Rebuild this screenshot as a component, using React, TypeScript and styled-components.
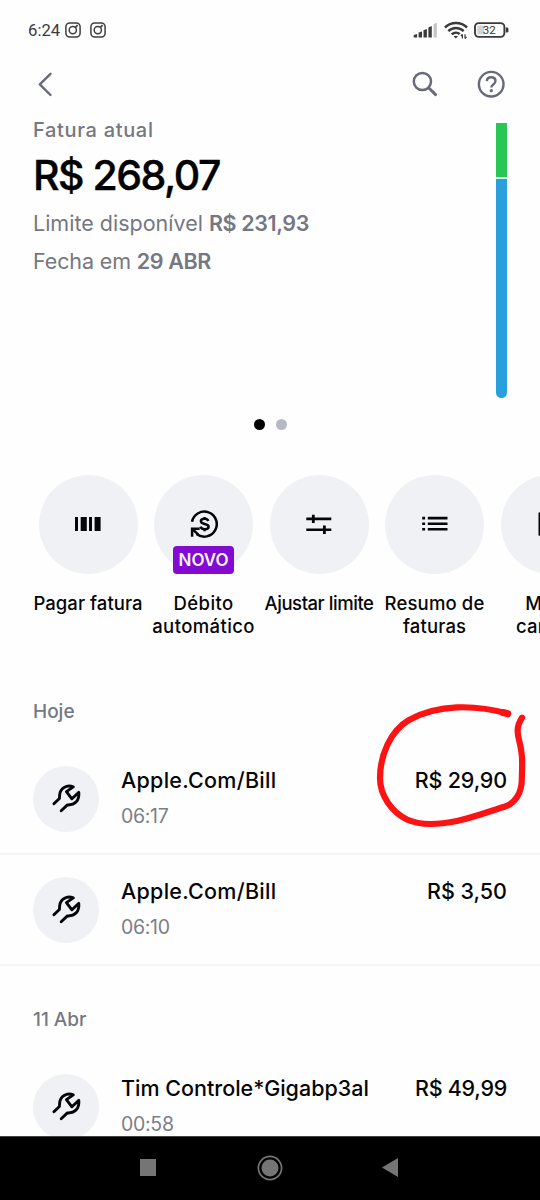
import React from "react";
import styled, { createGlobalStyle } from "styled-components";

const GlobalStyle = createGlobalStyle`
  * { box-sizing: border-box; }
  body { margin: 0; background: #fff; }
`;

const INK = "#050608";
const MUTED = "#757782";
const DISC = "#f0f1f5";

const Screen = styled.div`
  width: 540px;
  height: 1200px;
  display: flex;
  flex-direction: column;
  overflow: hidden;
  background: #fefefe;
  color: ${INK};
  font-family: Inter, "Liberation Sans", sans-serif;
`;

const StatusBar = styled.div`
  height: 60px;
  flex: none;
  display: flex;
  align-items: center;
  justify-content: space-between;
  padding: 0 31px 0 28px;
`;

const StatusGroup = styled.div<{ $gap: number }>`
  display: flex;
  align-items: center;
  gap: ${(p) => p.$gap}px;
`;

const Clock = styled.span`
  width: 37px;
  padding-top: 1px;
  font-family: Roboto, sans-serif;
  font-size: 16.7px;
  line-height: 20px;
  color: #3c3c3c;
  white-space: nowrap;
`;

const TopBar = styled.div`
  height: 48px;
  flex: none;
  display: flex;
  align-items: center;
  justify-content: space-between;
  padding: 0 35px 0 37px;
`;

const TopActions = styled.div`
  display: flex;
  gap: 39px;
`;

const Summary = styled.section`
  height: 290px;
  flex: none;
  display: flex;
  justify-content: space-between;
  padding: 15px 33px 0 33px;
`;

const SummaryText = styled.div`
  display: flex;
  flex-direction: column;
  white-space: nowrap;
`;

const Caption = styled.div`
  height: 16px;
  font-size: 20px;
  font-weight: 500;
  line-height: 15px;
  letter-spacing: 0.68px;
  color: ${MUTED};
`;

const Total = styled.div`
  margin-top: 11px;
  font-size: 41px;
  font-weight: 500;
  line-height: 51px;
  letter-spacing: -1.5px;
  color: #000;
  -webkit-text-stroke: 0.4px #000;
`;

const Detail = styled.div<{ $gap: number; $tracking: number }>`
  margin-top: ${(p) => p.$gap}px;
  font-size: 21.5px;
  font-weight: 400;
  line-height: 35px;
  letter-spacing: ${(p) => p.$tracking}px;
  color: ${MUTED};

  b {
    font-weight: 600;
    letter-spacing: -0.4px;
  }
`;

const LimitBar = styled.div`
  width: 11px;
  height: 275px;
  display: flex;
  flex-direction: column;
  gap: 2px;
  background: #d9f6ec;
  border-radius: 0 0 6px 6px;
`;

const Available = styled.div`
  height: 54px;
  background: #28c653;
`;

const Used = styled.div`
  flex: 1;
  background: #29a0dc;
  border-radius: 0 0 6px 6px;
`;

const Pager = styled.div`
  height: 53px;
  flex: none;
  display: flex;
  justify-content: center;
  align-items: center;
  gap: 11px;
`;

const Dot = styled.span<{ $active?: boolean }>`
  width: 11px;
  height: 11px;
  border-radius: 50%;
  background: ${(p) => (p.$active ? "#000" : "#b6b9c4")};
`;

const Shortcuts = styled.nav`
  height: 248px;
  flex: none;
  display: flex;
  padding: 24px 0 0 30.3px;
`;

const Shortcut = styled.div`
  width: 115.5px;
  flex: none;
  display: flex;
  flex-direction: column;
  align-items: center;
`;

const ShortcutDisc = styled.div`
  position: relative;
  width: 99px;
  height: 99px;
  border-radius: 50%;
  display: flex;
  align-items: center;
  justify-content: center;
  background: ${DISC};
  padding-bottom: 2px;
`;

const Badge = styled.span`
  position: absolute;
  left: 19px;
  bottom: 0;
  width: 61px;
  height: 28px;
  border-radius: 4px;
  background: #820ad1;
  color: #fbf2ff;
  font-size: 17px;
  font-weight: 600;
  line-height: 28px;
  text-align: center;
`;

const ShortcutLabel = styled.div<{ $tracking: number }>`
  margin-top: 18px;
  font-size: 18.5px;
  font-weight: 500;
  line-height: 23px;
  letter-spacing: ${(p) => p.$tracking}px;
  text-align: center;
  white-space: pre;
`;

const Feed = styled.main`
  flex: 1;
  min-height: 0;
  overflow: hidden;
`;

const DayHeading = styled.h2<{ $first?: boolean }>`
  margin: 0;
  height: ${(p) => (p.$first ? 45 : 86)}px;
  padding: ${(p) => (p.$first ? 0 : 41)}px 33px 0;
  font-size: 19px;
  font-weight: 500;
  line-height: 25px;
  color: ${MUTED};
`;

const Row = styled.div`
  height: 111px;
  display: flex;
  align-items: flex-start;
  padding: 22px 33px 0;
  border-bottom: 2px solid #f4f4f6;
`;

const RowDisc = styled.div`
  width: 66px;
  height: 66px;
  flex: none;
  border-radius: 50%;
  background: ${DISC};
`;

const RowText = styled.div`
  flex: 1;
  margin-left: 22px;
  white-space: nowrap;
`;

const Merchant = styled.div<{ $tracking: number }>`
  font-size: 21.5px;
  font-weight: 500;
  line-height: 29px;
  letter-spacing: ${(p) => p.$tracking}px;
`;

const Time = styled.div`
  margin-top: 7px;
  font-size: 19.5px;
  font-weight: 400;
  line-height: 28px;
  letter-spacing: -0.3px;
  color: #7c7e88;
`;

const Amount = styled.div<{ $tracking: number }>`
  position: relative;
  font-size: 21.5px;
  font-weight: 500;
  line-height: 29px;
  letter-spacing: ${(p) => p.$tracking}px;
  white-space: nowrap;
`;

const Scribble = styled.svg`
  position: absolute;
  right: -33px;
  top: -76px;
  pointer-events: none;
`;

const NavBar = styled.footer`
  height: 64px;
  flex: none;
  display: flex;
  align-items: center;
  justify-content: space-between;
  padding: 0 142px 2px 140px;
  background: #000;
  border-top: 1px solid #444;
`;

const InstagramIcon = () => (
  <svg width="16" height="16" viewBox="0 0 16 16" fill="none" stroke="#3f3f3f" strokeWidth="1.5">
    <rect x="0.9" y="0.9" width="14.2" height="14.2" rx="3.8" />
    <circle cx="7.8" cy="8.1" r="3.6" />
    <path d="M10.5 5.3 12.6 3.2" strokeWidth="1.7" />
  </svg>
);

const SignalIcon = () => (
  <svg width="24" height="16" viewBox="0 0 24 16" fill="#3a3a3a">
    <path d="M.7 15.500v-2.600l3.400-1v3.600zM5.600 15.500v-5l3.400-1.100v6.100zM10.500 15.500V8.200l3.400-1.200v8.500zM15.400 15.500V5.400l3.400-1.400v11.500z" />
    <path d="M20.600 15.500V2L23.800.7v14.800z" fill="#c4c4c4" />
  </svg>
);

const WifiIcon = () => (
  <svg width="24" height="18" viewBox="0 0 24 18" fill="none" stroke="#3a3a3a" strokeWidth="2.5">
    <path d="M1 6.500C7 .6 17 .6 23 6.500M4.300 10.100c4.400-4.300 11-4.300 15.400 0M7.700 13.400c2.500-2.200 6-2.200 8-.3" />
    <path d="m11.800 17.600-2.100-2.200c1.200-1 3-1 4.200 0z" fill="#3a3a3a" stroke="none" />
    <path d="M18.400 17.500v-4.200M16.900 15l1.500-1.700M21 13.300v4.200M22.500 15.800 21 17.500" strokeWidth="1.200" />
  </svg>
);

const BatteryIcon = () => (
  <svg width="35" height="16" viewBox="0 0 35 16">
    <rect x="1" y="1.1" width="29.400" height="13.800" rx="3.800" fill="none" stroke="#3a3a3a" strokeWidth="1.900" />
    <rect x="3.200" y="3.600" width="6.800" height="8.800" rx="1.500" fill="#d4d4d4" />
    <path d="M31.800 5.400h1.200q1.400 0 1.400 1.400v2.400q0 1.400-1.400 1.400h-1.200z" fill="#3a3a3a" />
    <text x="15.200" y="12.100" textAnchor="middle" fontFamily="Roboto, sans-serif" fontSize="11.500" fill="#333">
      32
    </text>
  </svg>
);

const BackIcon = () => (
  <svg width="16" height="26" viewBox="0 0 16 26" fill="none" stroke="#686b77" strokeWidth="2.400" strokeLinecap="round" strokeLinejoin="round">
    <path d="M13.500 2.800 2.800 13.400 13.500 24" />
  </svg>
);

const SearchIcon = () => (
  <svg width="27" height="28" viewBox="0 0 27 28" fill="none" stroke="#686b77" strokeWidth="2.500">
    <circle cx="11.400" cy="11.500" r="8.600" />
    <path d="m17.600 17.700 7 6.900" strokeWidth="2.900" strokeLinecap="round" />
  </svg>
);

const HelpIcon = () => (
  <svg width="28" height="28" viewBox="0 0 28 28" fill="none" stroke="#686b77" strokeWidth="2.400">
    <circle cx="14.200" cy="14.200" r="12.300" />
    <path d="M9.800 11.200c.2-2.500 2-3.900 4.300-3.900 2.600 0 4.400 1.500 4.400 3.700 0 3.500-4.200 3.300-4.200 6.500" />
    <circle cx="14.300" cy="20.700" r="1.600" fill="#686b77" stroke="none" />
  </svg>
);

const BarcodeIcon = () => (
  <svg width="26" height="14" viewBox="0 0 26 14" fill={INK}>
    <path d="M0 0h3v14H0zM5.700 0h6.100v14H5.700zM14 0h3v14h-3zM19.600 0h6v14h-6z" />
  </svg>
);

const AutoDebitIcon = () => (
  <svg width="28" height="28" viewBox="0 0 28 28" fill="none" stroke={INK} strokeWidth="2.500">
    <path d="M2 11.700A12.500 12.500 0 1 1 6.600 24" />
    <path d="M2.100 26.800v-8h7.600M2.600 19.200l5.600 5.500" />
    <path d="M18.300 11c-.5-1.500-1.900-2.200-3.700-2.200-2.200 0-3.700.9-3.700 2.500 0 3.700 7.700 1.700 7.700 5.400 0 1.700-1.600 2.500-3.900 2.500-2.100 0-3.700-.8-4.200-2.500M14.600 7v2M14.600 19v2.200" strokeWidth="2.500" />
  </svg>
);

const SlidersIcon = () => (
  <svg width="26" height="20" viewBox="0 0 26 20" fill="none" stroke={INK} strokeWidth="2.600">
    <path d="M.3 4.900h25M.3 15.800h25" />
    <path d="M7.300.8v8.300M18.400 11.600v8.300" strokeWidth="2.800" />
  </svg>
);

const ListIcon = () => (
  <svg width="26" height="16" viewBox="0 0 26 16" fill={INK}>
    <path d="M.2.8h2.900v2.600H.2zM.2 6.400h2.900V9H.2zM.2 12h2.900v2.600H.2zM5.800.8h19.700v2.600H5.800zM5.800 6.400h19.700V9H5.800zM5.800 12h19.700v2.600H5.800z" />
  </svg>
);

const CardIcon = () => (
  <svg width="24" height="24" viewBox="0 0 24 24" fill="none" stroke={INK} strokeWidth="2.600">
    <rect x="1.800" y="1.800" width="20.500" height="20.500" />
  </svg>
);

const WrenchIcon = () => (
  <svg width="66" height="66" viewBox="0 0 66 66" fill="none" stroke={INK} strokeWidth="2.900" strokeLinejoin="round" strokeLinecap="round">
    <path d="M20.900 37.800 26.400 32.500 26.700 28.500C27.300 22.300 33.500 18.300 40.300 20.900L33.400 25.600 38.900 32.800 45.800 26.400C46.600 34.500 42 39.300 34.400 38.900L28.200 44.700" />
  </svg>
);

const shortcuts = [
  { label: "Pagar fatura", icon: <BarcodeIcon />, tracking: 0.05 },
  { label: "Débito\nautomático", icon: <AutoDebitIcon />, tracking: 0.4, badge: "NOVO" },
  { label: "Ajustar limite", icon: <SlidersIcon />, tracking: -0.45 },
  { label: "Resumo de\nfaturas", icon: <ListIcon />, tracking: 0.15 },
  { label: "Meus\ncartões", icon: <CardIcon />, tracking: 0.15 },
];

type Purchase = {
  merchant: string;
  time: string;
  amount: string;
  merchantTracking?: number;
  amountTracking?: number;
  circled?: boolean;
};

const PurchaseRow = ({ merchant, time, amount, merchantTracking = 0, amountTracking = 0, circled }: Purchase) => (
  <Row>
    <RowDisc>
      <WrenchIcon />
    </RowDisc>
    <RowText>
      <Merchant $tracking={merchantTracking}>{merchant}</Merchant>
      <Time>{time}</Time>
    </RowText>
    <Amount $tracking={amountTracking}>
      {amount}
      {circled && (
        <Scribble width="180" height="150" viewBox="0 0 180 150" fill="none" stroke="#fc1414" strokeWidth="6.200" strokeLinecap="round" strokeLinejoin="round">
          <path d="M147.800 23.700C115 14.500 78 14 49 30C30 41 20 66 20 88C20 106 32 122 47 129.500C62 136.500 80 134.500 97 131C115 127 132 120.500 145 116.500C156 113 161.500 102 161.800 90C162.200 72 163 66 159.500 52C156.500 41 157 36 162 27.700" />
          <path d="m143 22.500 4.800 1.200" strokeWidth="7" />
        </Scribble>
      )}
    </Amount>
  </Row>
);

export default function App() {
  return (
    <Screen>
      <GlobalStyle />
      <StatusBar>
        <StatusGroup $gap={0}>
          <Clock>6:24</Clock>
          <StatusGroup $gap={9}>
            <InstagramIcon />
            <InstagramIcon />
          </StatusGroup>
        </StatusGroup>
        <StatusGroup $gap={6.5}>
          <SignalIcon />
          <WifiIcon />
          <BatteryIcon />
        </StatusGroup>
      </StatusBar>
      <TopBar>
        <BackIcon />
        <TopActions>
          <SearchIcon />
          <HelpIcon />
        </TopActions>
      </TopBar>
      <Summary>
        <SummaryText>
          <Caption>Fatura atual</Caption>
          <Total>R$ 268,07</Total>
          <Detail $gap={5} $tracking={0}>
            Limite disponível <b>R$ 231,93</b>
          </Detail>
          <Detail $gap={3} $tracking={-0.12}>
            Fecha em <b>29 ABR</b>
          </Detail>
        </SummaryText>
        <LimitBar>
          <Available />
          <Used />
        </LimitBar>
      </Summary>
      <Pager>
        <Dot $active />
        <Dot />
      </Pager>
      <Shortcuts>
        {shortcuts.map((s) => (
          <Shortcut key={s.label}>
            <ShortcutDisc>
              {s.icon}
              {s.badge && <Badge>{s.badge}</Badge>}
            </ShortcutDisc>
            <ShortcutLabel $tracking={s.tracking}>{s.label}</ShortcutLabel>
          </Shortcut>
        ))}
      </Shortcuts>
      <Feed>
        <DayHeading $first>Hoje</DayHeading>
        <PurchaseRow merchant="Apple.Com/Bill" time="06:17" amount="R$ 29,90" merchantTracking={0.27} amountTracking={-0.15} circled />
        <PurchaseRow merchant="Apple.Com/Bill" time="06:10" amount="R$ 3,50" merchantTracking={0.27} />
        <DayHeading>11 Abr</DayHeading>
        <PurchaseRow merchant="Tim Controle*Gigabp3al" time="00:58" amount="R$ 49,99" amountTracking={-0.25} />
      </Feed>
      <NavBar>
        <svg width="16" height="17" viewBox="0 0 16 17">
          <path d="M0 0h16v17H0z" fill="#757575" />
        </svg>
        <svg width="28" height="26" viewBox="0 0 28 26">
          <circle cx="15" cy="13" r="11.600" fill="none" stroke="#757575" strokeWidth="1.700" />
          <circle cx="15" cy="13" r="8.500" fill="#757575" />
        </svg>
        <svg width="16" height="19" viewBox="0 0 16 19">
          <path d="M16 0v19L0 9.500z" fill="#757575" />
        </svg>
      </NavBar>
    </Screen>
  );
}
